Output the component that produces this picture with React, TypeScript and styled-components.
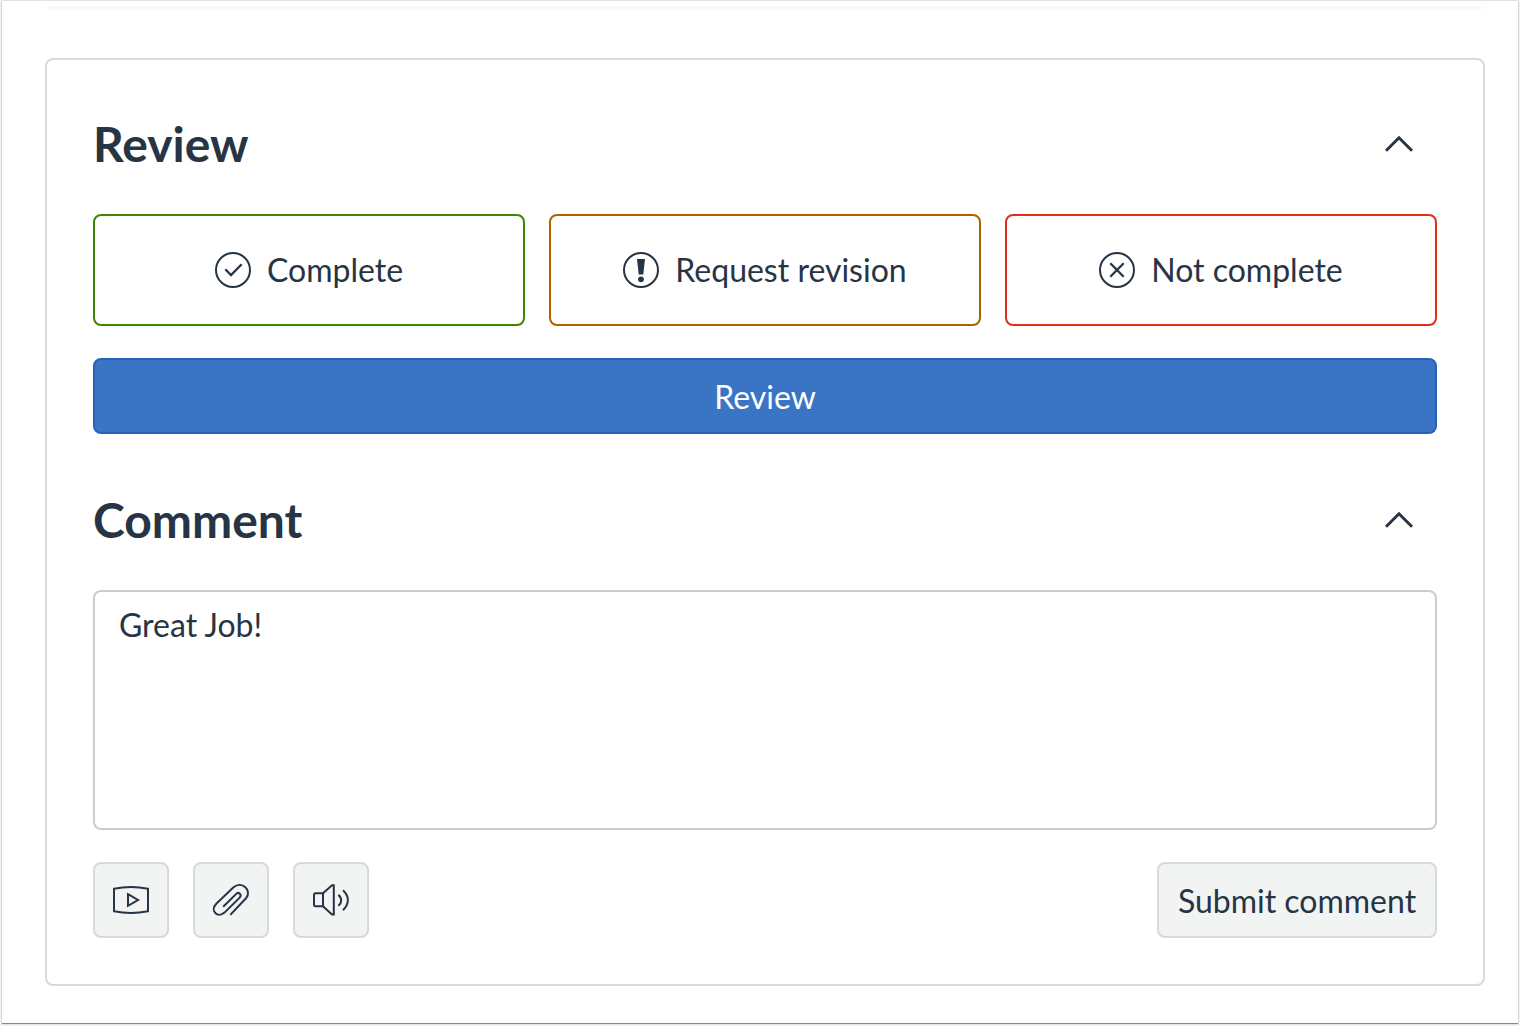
import React, { useState } from "react";
import styled, { createGlobalStyle } from "styled-components";

const ink = "#273444";
const line = "#d6d9df";

const GlobalStyle = createGlobalStyle`
  *, *::before, *::after { box-sizing: border-box; }
  body {
    margin: 0;
    background: #f4f4f4;
    color: ${ink};
    font-family: Lato, "Open Sans", sans-serif;
    font-size: 32px;
    line-height: 42px;
  }
`;

const Frame = styled.div`
  min-height: 100vh;
  padding: 1px 2px 3px;
  display: flex;
`;

const Page = styled.main`
  flex: 1;
  min-width: 0;
  padding: 5px 33px 37px 43px;
  background: #fff;
  box-shadow: 0 1px 1px rgba(0, 0, 0, 0.4), 0 0 1px rgba(0, 0, 0, 0.4);
`;

const PreviousPanel = styled.div`
  height: 4px;
  margin-bottom: 48px;
  border-radius: 0 0 8px 8px;
  background: #f9fafc;
`;

const Card = styled.div`
  padding: 46px;
  border: 2px solid ${line};
  border-radius: 8px;
`;

const Section = styled.section`
  display: flex;
  flex-direction: column;
  gap: 32px;

  & + & {
    margin-top: 48px;
  }
`;

const SectionHeader = styled.header`
  display: flex;
  align-items: center;
  justify-content: space-between;
`;

const Title = styled.h2`
  margin: 0;
  font-size: 48px;
  line-height: 60px;
  font-weight: 700;
`;

const BaseButton = styled.button`
  display: flex;
  align-items: center;
  justify-content: center;
  height: 76px;
  padding: 0 18px;
  border: 2px solid ${line};
  border-radius: 8px;
  background: #f2f4f4;
  color: ${ink};
  font: inherit;
  cursor: pointer;
`;

const ToggleButton = styled(BaseButton)`
  width: 76px;
  border-color: transparent;
  background: transparent;
`;

const Choices = styled.div`
  display: grid;
  grid-template-columns: repeat(3, 1fr);
  gap: 24px;
`;

const ChoiceButton = styled(BaseButton)<{ $tone: string }>`
  height: 112px;
  gap: 16px;
  border-color: ${(p) => p.$tone};
  background: #fff;
`;

const PrimaryButton = styled(BaseButton)`
  padding-top: 2px;
  border-color: #2560bb;
  background: #3a74c5;
  color: #fff;
`;

const SubmitButton = styled(BaseButton)`
  min-width: 280px;
  padding-top: 2px;
`;

const CommentBox = styled.textarea`
  display: block;
  width: 100%;
  height: 240px;
  padding: 12px 24px;
  border: 2px solid #c7cdd1;
  border-radius: 8px;
  background: #fff;
  color: ${ink};
  font: inherit;
  resize: none;
`;

const Actions = styled.div`
  display: flex;
  justify-content: space-between;
`;

const Tools = styled.div`
  display: flex;
  gap: 24px;
`;

const ToolButton = styled(BaseButton)`
  width: 76px;
`;

const Glyph = styled.svg`
  width: 36px;
  height: 36px;
  flex: none;
  overflow: visible;
  fill: none;
  stroke: currentColor;
  stroke-width: 2;
`;

function Icon({ children }: { children: React.ReactNode }) {
  return (
    <Glyph viewBox="0 0 36 36" aria-hidden="true">
      {children}
    </Glyph>
  );
}

const CheckIcon = () => (
  <Icon>
    <circle cx="18" cy="18" r="17" />
    <path d="M10.300 17.300 16 23 26.700 12.300" strokeWidth="2.300" />
  </Icon>
);

const AlertIcon = () => (
  <Icon>
    <circle cx="18" cy="18" r="17" />
    <path d="M14 7h8l-1.700 15.600h-4.600z" fill="currentColor" stroke="none" />
    <circle cx="18" cy="27.300" r="2.900" fill="currentColor" stroke="none" />
  </Icon>
);

const CrossIcon = () => (
  <Icon>
    <circle cx="18" cy="18" r="17" />
    <path d="M11.300 11.300 24.700 24.700M24.700 11.300 11.300 24.700" strokeWidth="2.300" />
  </Icon>
);

const VideoIcon = () => (
  <Icon>
    <path d="M1 6.800Q18 3.200 35 6.800V29.200Q18 32.800 1 29.200Z" />
    <path d="M15 12.200 25 18 15 23.800Z" />
  </Icon>
);

const PaperclipIcon = () => (
  <Icon>
    <path
      d="M10.200 24.800 23.500 11.600C25.500 9.600 29.300 12.600 26.700 15.600L11.500 30.600C4.500 36.700-3.500 28.500 3.500 21.500L20.500 5.300C29-1.800 39.500 8.700 33 16.300L17.300 32.900"
    />
  </Icon>
);

const SoundIcon = () => (
  <Icon>
    <path d="M10 11.200H2.500Q1 11.200 1 12.700V22.700Q1 24.200 2.500 24.200H10Z" />
    <path d="M10 11.200 19 3.200H20.800V32.600H19L10 24.200" />
    <path d="M25.300 12.900C29.100 15.900 29.100 20.900 25.300 23.700M30 8.200C36.500 14.200 36.500 21.900 30 28.300" />
  </Icon>
);

function CollapsibleSection({
  title,
  id,
  children,
}: {
  title: string;
  id: string;
  children: React.ReactNode;
}) {
  const [open, setOpen] = useState(true);
  return (
    <Section aria-labelledby={id}>
      <SectionHeader>
        <Title id={id}>{title}</Title>
        <ToggleButton
          type="button"
          aria-expanded={open}
          aria-labelledby={id}
          onClick={() => setOpen(!open)}
        >
          <Icon>
            <path
              d={open ? "M5 24.800 18 11.800 31 24.800" : "M5 11.800 18 24.800 31 11.800"}
              strokeWidth="3"
            />
          </Icon>
        </ToggleButton>
      </SectionHeader>
      {open && children}
    </Section>
  );
}

export default function App() {
  const [comment, setComment] = useState("Great Job!");
  return (
    <>
      <GlobalStyle />
      <Frame>
        <Page>
          <PreviousPanel />
          <Card>
            <CollapsibleSection title="Review" id="review-title">
              <Choices>
                <ChoiceButton type="button" $tone="#3f8600">
                  <CheckIcon />
                  Complete
                </ChoiceButton>
                <ChoiceButton type="button" $tone="#ab6300">
                  <AlertIcon />
                  Request revision
                </ChoiceButton>
                <ChoiceButton type="button" $tone="#dd3017">
                  <CrossIcon />
                  Not complete
                </ChoiceButton>
              </Choices>
              <PrimaryButton type="button">Review</PrimaryButton>
            </CollapsibleSection>
            <CollapsibleSection title="Comment" id="comment-title">
              <CommentBox
                aria-labelledby="comment-title"
                value={comment}
                onChange={(e) => setComment(e.target.value)}
              />
              <Actions>
                <Tools>
                  <ToolButton type="button" aria-label="Record video">
                    <VideoIcon />
                  </ToolButton>
                  <ToolButton type="button" aria-label="Attach file">
                    <PaperclipIcon />
                  </ToolButton>
                  <ToolButton type="button" aria-label="Record audio">
                    <SoundIcon />
                  </ToolButton>
                </Tools>
                <SubmitButton type="submit">Submit comment</SubmitButton>
              </Actions>
            </CollapsibleSection>
          </Card>
        </Page>
      </Frame>
    </>
  );
}
